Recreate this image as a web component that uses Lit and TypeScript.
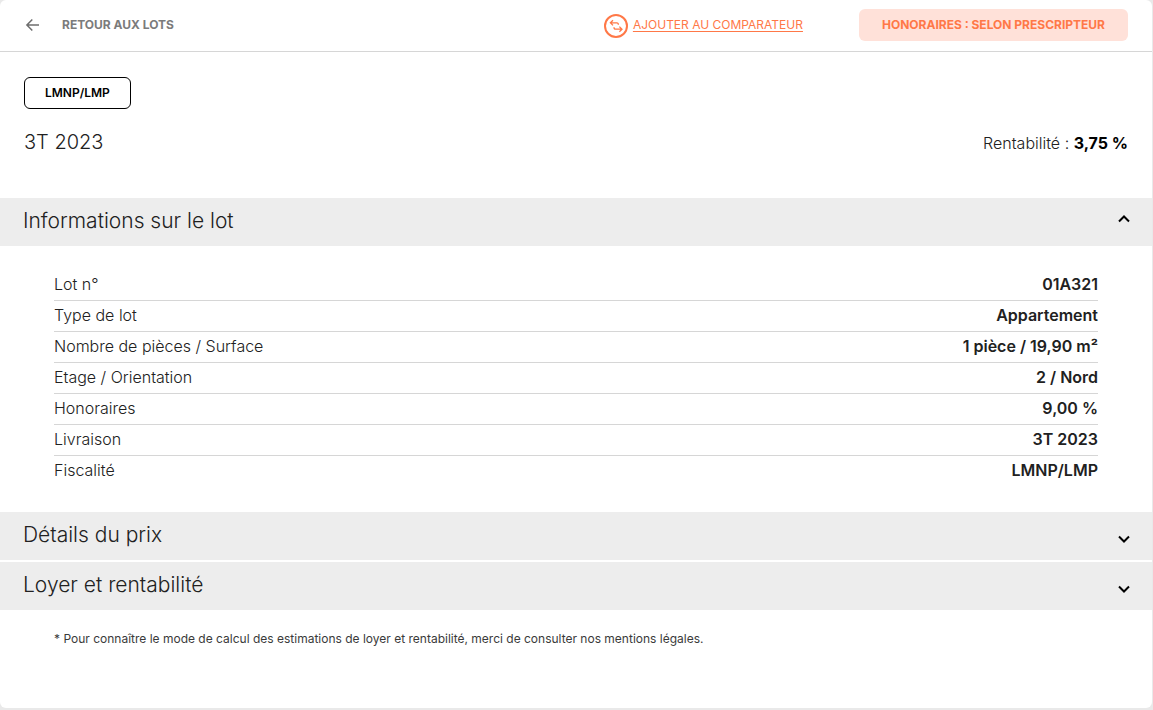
import { LitElement, html, css, nothing } from "lit";
import { customElement, property, state } from "lit/decorators.js";

interface Fact {
  label: string;
  value: string;
}

const LOT_FACTS: Fact[] = [
  { label: "Lot n°", value: "01A321" },
  { label: "Type de lot", value: "Appartement" },
  { label: "Nombre de pièces / Surface", value: "1 pièce / 19,90 m²" },
  { label: "Etage / Orientation", value: "2 / Nord" },
  { label: "Honoraires", value: "9,00 %" },
  { label: "Livraison", value: "3T 2023" },
  { label: "Fiscalité", value: "LMNP/LMP" },
];

@customElement("lot-section")
export class LotSection extends LitElement {
  @property() heading = "";
  @property({ type: Boolean, reflect: true }) open = false;
  @property({ attribute: false }) facts: Fact[] = [];

  static styles = css`
    :host {
      display: block;
    }
    .heading {
      margin: 0;
      font: inherit;
    }
    .toggle {
      display: flex;
      align-items: center;
      justify-content: space-between;
      box-sizing: border-box;
      width: 100%;
      min-height: 48px;
      padding: 0 22px 2px 23px;
      border: 0;
      background: #ededed;
      color: #212121;
      font-family: inherit;
      font-size: 21px;
      font-weight: 300;
      line-height: 24px;
      text-align: left;
      cursor: pointer;
    }
    .open {
      font-weight: 350;
    }
    .chevron {
      display: block;
      width: 12px;
      height: 16px;
      fill: none;
      stroke: #000;
      stroke-width: 2;
    }
    .facts {
      margin: 0;
      padding: 24px 54px 26px;
      font-size: 16px;
      line-height: 28px;
    }
    .fact {
      display: flex;
      justify-content: space-between;
      gap: 16px;
      padding-bottom: 2px;
      border-bottom: 1px solid #d6d6d6;
    }
    .fact:last-child {
      border-bottom: 0;
    }
    .label {
      font-weight: 300;
    }
    .value {
      margin: 0;
      font-weight: 600;
      text-align: right;
    }
  `;

  private toggle() {
    this.open = !this.open;
  }

  render() {
    return html`
      <h2 class="heading">
        <button
          class="toggle ${this.open ? "open" : ""}"
          aria-expanded=${this.open ? "true" : "false"}
          @click=${this.toggle}
        >
          <span>${this.heading}</span>
          <svg class="chevron" viewBox="0 0 12 16" aria-hidden="true">
            <path d=${this.open ? "M1 8.5 6 3.5 11 8.5" : "M1 9.5 6 14.5 11 9.5"} />
          </svg>
        </button>
      </h2>
      ${this.open && this.facts.length
        ? html`<dl class="facts">
            ${this.facts.map(
              (fact) => html`<div class="fact">
                <dt class="label">${fact.label}</dt>
                <dd class="value">${fact.value}</dd>
              </div>`
            )}
          </dl>`
        : nothing}
    `;
  }
}

@customElement("app-root")
export class AppRoot extends LitElement {
  @state() private compared = false;

  static styles = css`
    :host {
      display: flex;
      flex-direction: column;
      box-sizing: border-box;
      min-height: 100vh;
      padding: 0 1px 2px 0;
      background: #e9e9e9;
      color: #212121;
      font-family: Inter, "Open Sans", sans-serif;
    }
    .card {
      flex: 1;
      border-radius: 6px;
      background: #fff;
    }
    .topbar {
      display: flex;
      align-items: center;
      justify-content: space-between;
      gap: 24px;
      padding: 9px 24px 10px;
      border-bottom: 1px solid #d6d6d6;
      font-size: 12px;
      line-height: 16px;
    }
    .back {
      display: flex;
      align-items: center;
      gap: 21px;
      color: #7b7b7b;
      font-weight: 700;
      text-decoration: none;
    }
    .arrow {
      width: 17px;
      height: 16px;
      fill: none;
      stroke: #6e6e6e;
      stroke-width: 1.5;
    }
    .actions {
      display: flex;
      align-items: center;
      gap: 56px;
    }
    .compare {
      display: flex;
      align-items: center;
      gap: 5px;
      padding: 0;
      border: 0;
      background: none;
      color: #ff7847;
      font: inherit;
      text-decoration: underline;
      text-underline-offset: 2px;
      cursor: pointer;
    }
    .swap {
      width: 24px;
      height: 26px;
      fill: none;
      stroke: #ff7847;
    }
    .fees {
      padding: 8px 23px;
      border-radius: 6px;
      background: #ffe1d9;
      color: #ff7847;
      font-weight: 700;
    }
    .summary {
      display: flex;
      flex-direction: column;
      align-items: flex-start;
      gap: 20px;
      padding: 25px 24px 42px;
    }
    .tag {
      padding: 7px 20px;
      border: 1px solid #000;
      border-radius: 6px;
      color: #000;
      font-size: 12px;
      font-weight: 600;
      line-height: 16px;
    }
    .headline {
      display: flex;
      align-items: center;
      justify-content: space-between;
      align-self: stretch;
    }
    .quarter {
      margin: 0;
      font-size: 20px;
      font-weight: 300;
      line-height: 27px;
    }
    .yield {
      margin: 0;
      font-size: 16px;
      font-weight: 300;
      line-height: 24px;
    }
    .rate {
      color: #000;
      font-weight: 700;
    }
    .sections {
      display: grid;
      gap: 2px;
    }
    .sections lot-section[open] {
      margin-bottom: -2px;
    }
    .note {
      margin: 0;
      padding: 20px 54px;
      color: #3a3a3a;
      font-size: 12px;
      line-height: 18px;
    }
  `;

  private toggleCompare() {
    this.compared = !this.compared;
  }

  render() {
    return html`
      <main class="card">
        <header class="topbar">
          <a class="back" href="#lots">
            <svg class="arrow" viewBox="0 0 17 16" aria-hidden="true">
              <path d="M15 8H3.2M8.3 2.5 2.9 8l5.4 5.5" />
            </svg>
            <span>RETOUR AUX LOTS</span>
          </a>
          <div class="actions">
            <button
              class="compare"
              aria-pressed=${this.compared ? "true" : "false"}
              @click=${this.toggleCompare}
            >
              <svg class="swap" viewBox="0 0 24 26" aria-hidden="true">
                <circle cx="12" cy="14" r="11" stroke-width="2" />
                <path
                  stroke-width="1.3"
                  d="M9 8.2 6.4 10.8 9 13.4M6.6 10.8h6.2q1.6 0 1.6 2M15.4 14.6 18 17.2l-2.6 2.6M17.8 17.2h-6.2q-1.6 0-1.6-2"
                />
              </svg>
              <span>AJOUTER AU COMPARATEUR</span>
            </button>
            <span class="fees">HONORAIRES : SELON PRESCRIPTEUR</span>
          </div>
        </header>
        <section class="summary">
          <span class="tag">LMNP/LMP</span>
          <div class="headline">
            <h1 class="quarter">3T 2023</h1>
            <p class="yield">Rentabilité : <strong class="rate">3,75 %</strong></p>
          </div>
        </section>
        <div class="sections">
          <lot-section heading="Informations sur le lot" open .facts=${LOT_FACTS}></lot-section>
          <lot-section heading="Détails du prix"></lot-section>
          <lot-section heading="Loyer et rentabilité"></lot-section>
        </div>
        <p class="note">
          * Pour connaître le mode de calcul des estimations de loyer et rentabilité, merci de
          consulter nos mentions légales.
        </p>
      </main>
    `;
  }
}
